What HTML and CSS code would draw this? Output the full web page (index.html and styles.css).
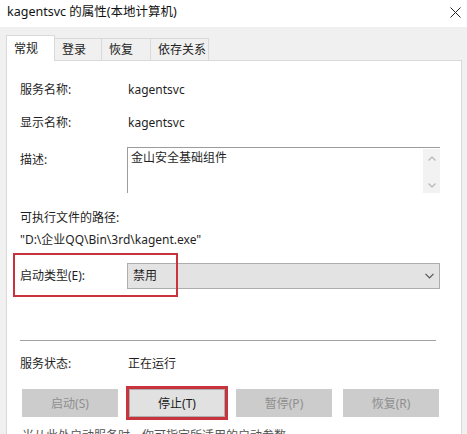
FILE: index.html
```html
<!DOCTYPE html>
<html lang="zh-CN">
<head>
<meta charset="utf-8">
<title>kagentsvc 的属性(本地计算机)</title>
<link rel="stylesheet" href="styles.css">
</head>
<body>
<div class="window">
  <div class="titlebar">
    <span class="title">kagentsvc 的属性(本地计算机)</span>
    <svg class="close" width="11" height="11" viewBox="0 0 11 11"><path d="M0.5 0.5 L10.5 10.5 M10.5 0.5 L0.5 10.5" stroke="#222" stroke-width="1" fill="none"/></svg>
  </div>
  <div class="main">
    <div class="tabs">
      <div class="tab tab-active tab-w1">常规</div>
      <div class="tab tab-w2">登录</div>
      <div class="tab tab-w3">恢复</div>
      <div class="tab tab-w4">依存关系</div>
    </div>
    <div class="panel">
      <div class="row row-first">
        <span class="label">服务名称:</span>
        <span class="value">kagentsvc</span>
      </div>
      <div class="row row-gap17">
        <span class="label">显示名称:</span>
        <span class="value">kagentsvc</span>
      </div>
      <div class="row row-desc">
        <span class="label label-desc">描述:</span>
        <div class="textarea">
          <span class="textarea-text">金山安全基础组件</span>
          <div class="scrollbar">
            <svg width="8" height="5" viewBox="0 0 8 5"><path d="M0.5 4.5 L4 1 L7.5 4.5" stroke="#b5b5b5" stroke-width="1.2" fill="none"/></svg>
            <svg width="8" height="5" viewBox="0 0 8 5"><path d="M0.5 0.5 L4 4 L7.5 0.5" stroke="#b5b5b5" stroke-width="1.2" fill="none"/></svg>
          </div>
        </div>
      </div>
      <div class="line row-gap17">可执行文件的路径:</div>
      <div class="line row-gap6">"D:\企业QQ\Bin\3rd\kagent.exe"</div>
      <div class="row row-select">
        <span class="label">启动类型(E):</span>
        <div class="select">
          <span>禁用</span>
          <svg width="9" height="6" viewBox="0 0 9 6"><path d="M0.5 0.8 L4.5 4.8 L8.5 0.8" stroke="#555" stroke-width="1.2" fill="none"/></svg>
        </div>
        <span class="annot-box"></span>
      </div>
      <div class="separator"></div>
      <div class="row row-status">
        <span class="label">服务状态:</span>
        <span class="value">正在运行</span>
      </div>
      <div class="buttons">
        <div class="btn btn-disabled">启动(S)</div>
        <div class="btn btn-active">停止(T)</div>
        <div class="btn btn-disabled">暂停(P)</div>
        <div class="btn btn-disabled">恢复(R)</div>
      </div>
      <div class="line footer">当从此处启动服务时，你可指定所适用的启动参数。</div>
    </div>
  </div>
</div>
</body>
</html>
```

FILE: styles.css
```css
* { box-sizing: border-box; }
html, body {
  margin: 0;
  padding: 0;
}
body {
  width: 467px;
  height: 434px;
  overflow: hidden;
  background: #f0f0f0;
  font-family: "Noto Sans", "Noto Sans CJK SC", sans-serif;
  font-size: 12px;
  color: #1f1f1f;
}
.window {
  width: 467px;
  height: 434px;
  display: flex;
  flex-direction: column;
}
.titlebar {
  height: 27px;
  background: #ffffff;
  display: flex;
  align-items: center;
  justify-content: space-between;
  padding: 0 6px 0 7px;
  flex: none;
}
.title {
  font-size: 12.5px;
  color: #111;
  line-height: 16px;
  margin-top: -3px;
}
.close {
  margin-top: -3px;
}
.main {
  flex: 1;
  padding: 8px 5px 0 6px;
  display: flex;
  flex-direction: column;
}
.tabs {
  height: 25px;
  display: flex;
  align-items: flex-end;
  flex: none;
}
.tab {
  height: 22px;
  line-height: 21px;
  padding-left: 7px;
  background: #f0f0f0;
  border-top: 1px solid #d9d9d9;
  border-right: 1px solid #d9d9d9;
  color: #222;
}
.tab-active {
  height: 26px;
  line-height: 25px;
  margin-bottom: -1px;
  background: #ffffff;
  border-left: 1px solid #d9d9d9;
  position: relative;
  z-index: 1;
}
.tab-w1 { width: 49px; }
.tab-w2 { width: 47px; }
.tab-w3 { width: 49px; }
.tab-w4 { width: 58px; }
.panel {
  flex: 1;
  background: #ffffff;
  border: 1px solid #d9d9d9;
  border-bottom: none;
  padding: 21px 21px 0 13px;
}
.row {
  display: flex;
  align-items: flex-start;
  line-height: 16px;
}
.label {
  width: 108px;
  flex: none;
}
.row-first { margin-top: 0; }
.row-gap17 { margin-top: 17px; }
.row-gap6 { margin-top: 6px; }
.line { line-height: 16px; }
.row-desc { margin-top: 16px; }
.label-desc { padding-top: 5px; }
.textarea {
  flex: 1;
  height: 46px;
  margin-left: -1px;
  border-top: 1px solid #9c9c9c;
  border-left: 1px solid #9c9c9c;
  display: flex;
  justify-content: space-between;
}
.textarea-text {
  padding: 2px 0 0 3px;
}
.scrollbar {
  width: 17px;
  height: 44px;
  margin-top: 1px;
  background: #f2f2f2;
  display: flex;
  flex-direction: column;
  align-items: center;
  justify-content: space-between;
  padding: 7px 0 5px;
}
.row-select {
  margin-top: 15px;
  align-items: center;
  position: relative;
}
.select {
  flex: 1;
  height: 26px;
  margin-left: -1px;
  background: #e3e3e3;
  border: 1px solid #adadad;
  display: flex;
  align-items: center;
  justify-content: space-between;
  padding: 0 5px 0 5px;
}
.annot-box {
  position: absolute;
  left: -7px;
  top: -10px;
  width: 165px;
  height: 44px;
  border: 2px solid #c8343e;
}
.separator {
  margin-top: 51px;
  margin-right: 4px;
  height: 1px;
  background: #a3a3a3;
}
.row-status { margin-top: 15px; }
.buttons {
  margin-top: 17px;
  margin-left: 2px;
  margin-right: 1px;
  display: flex;
  justify-content: space-between;
}
.btn {
  width: 96px;
  height: 28px;
  display: flex;
  align-items: center;
  justify-content: center;
}
.btn-disabled {
  background: #cccccc;
  color: #8f8f8f;
}
.btn-active {
  background: #e1e1e1;
  border: 1px solid #adadad;
  color: #1a1a1a;
  outline: 3px solid #c8343e;
}
.footer {
  margin-top: 11px;
  margin-left: 2px;
  color: #555;
}
```
